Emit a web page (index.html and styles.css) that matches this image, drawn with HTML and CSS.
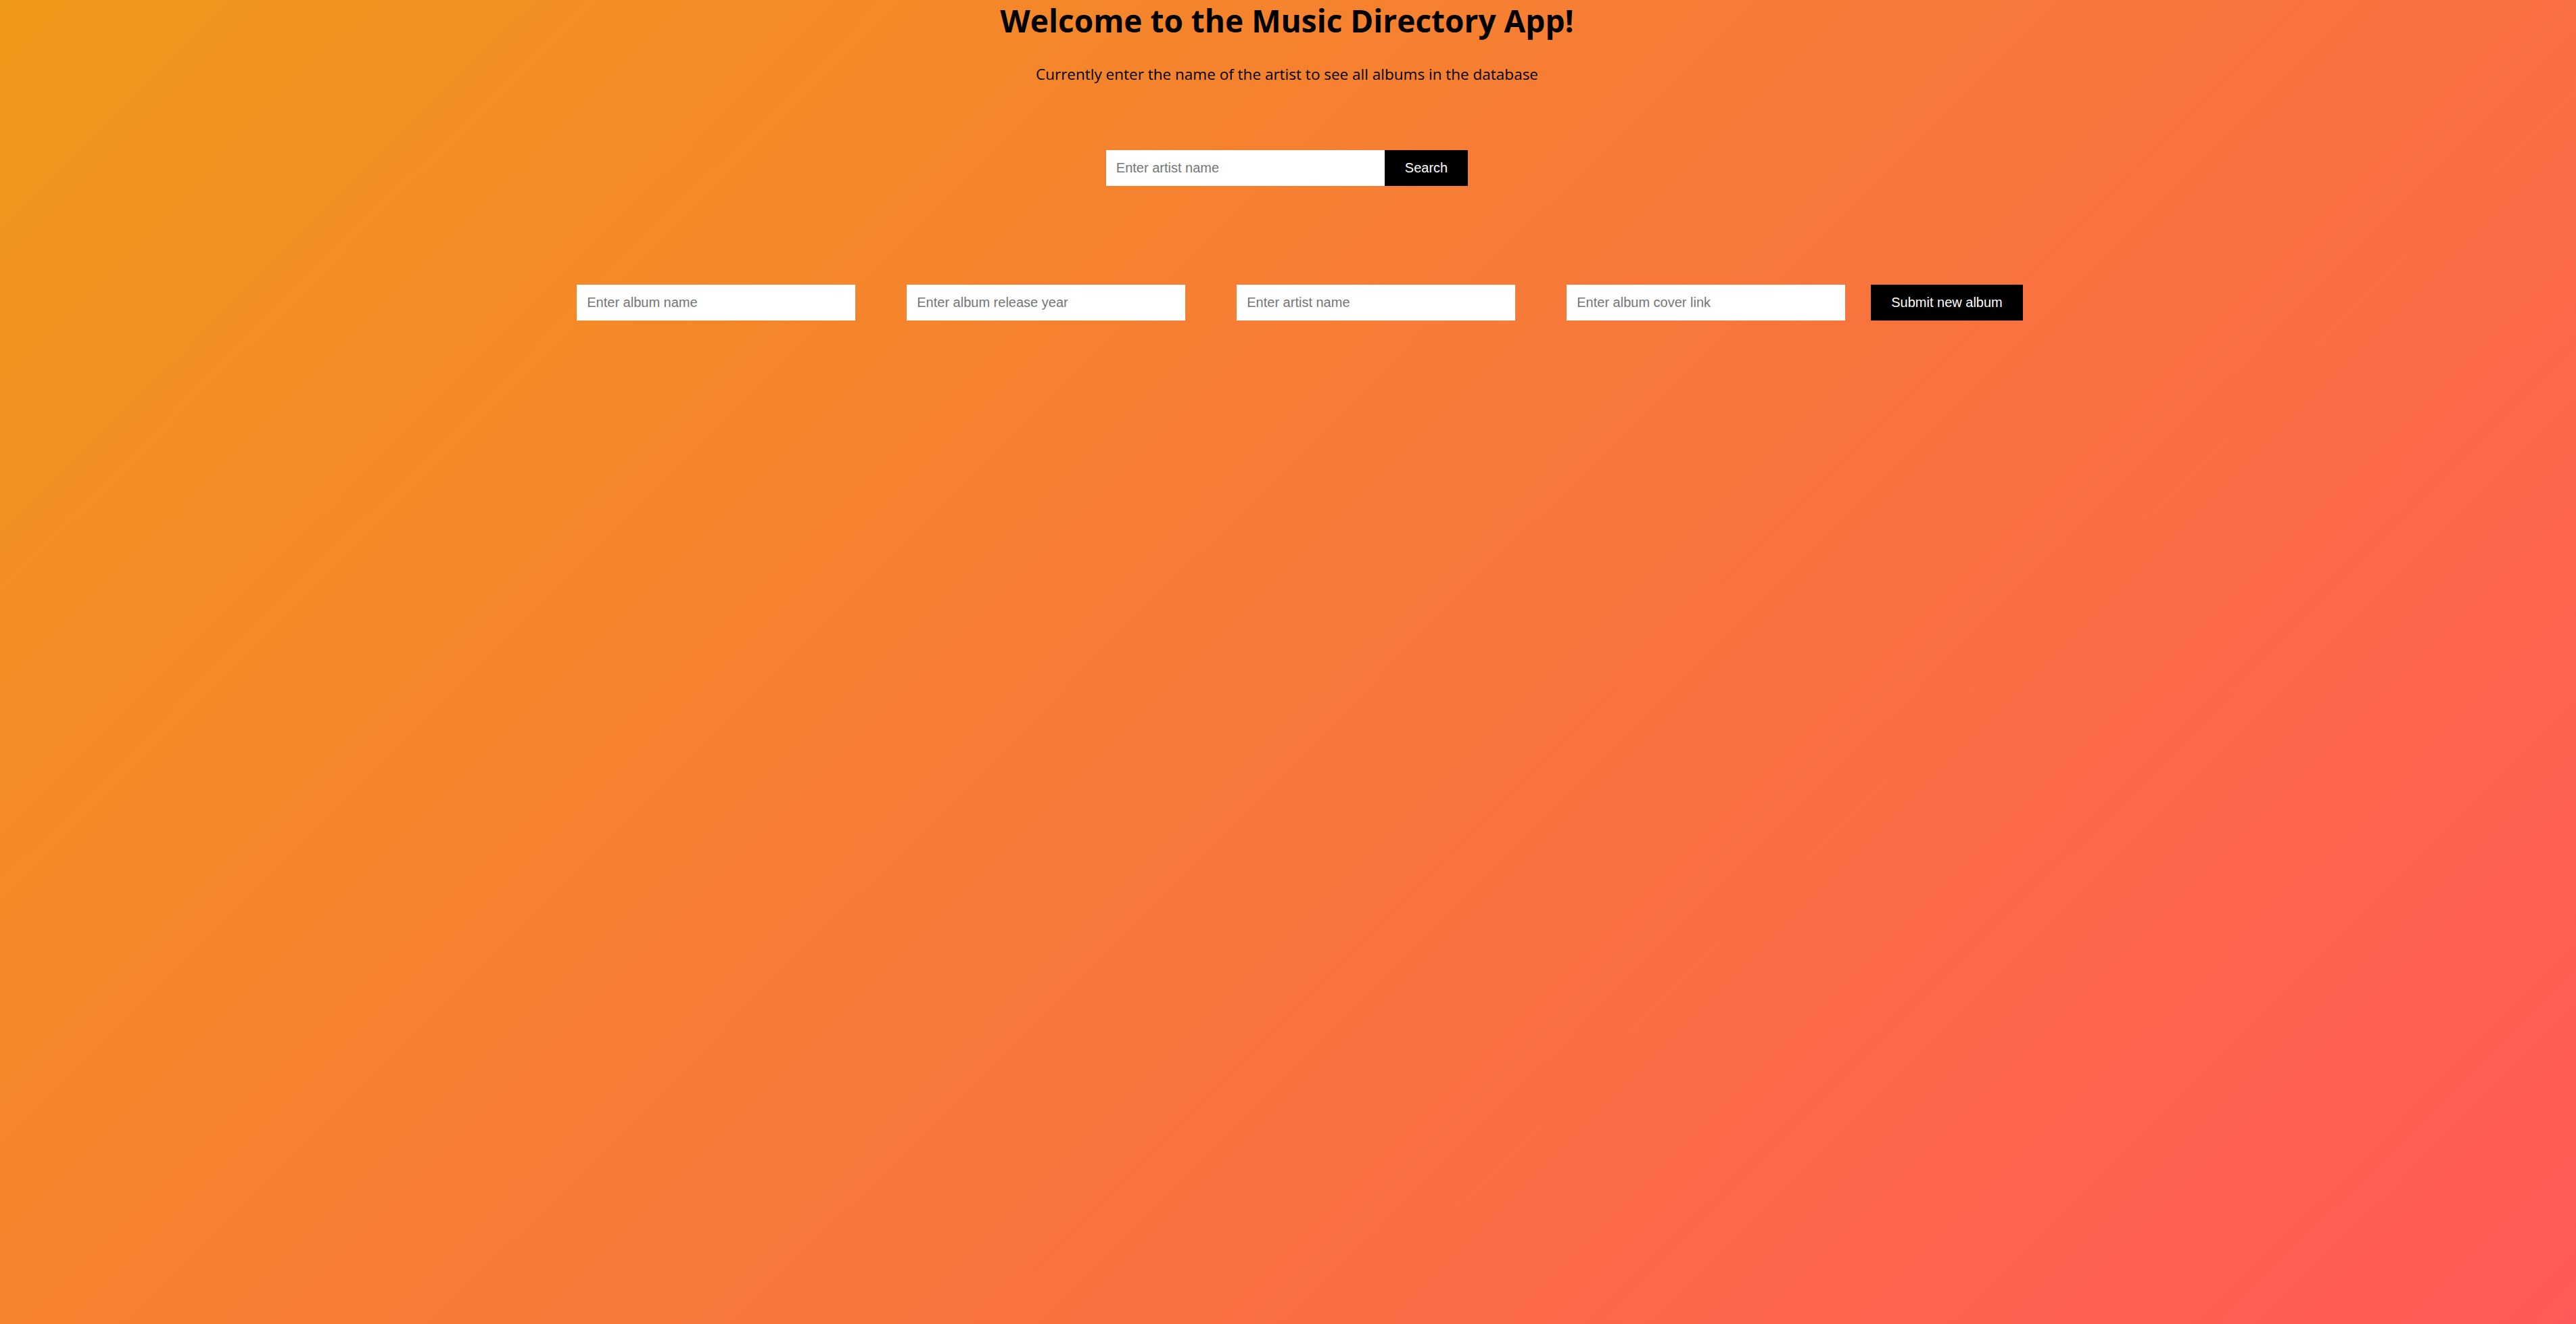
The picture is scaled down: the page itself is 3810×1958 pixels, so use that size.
FILE: index.html
```html
<!DOCTYPE html>
<html lang="en">
<head>
<meta charset="utf-8">
<title>Music Directory App</title>
<link rel="stylesheet" href="styles.css">
</head>
<body>
<div class="app">
  <h1 class="title">Welcome to the Music Directory App!</h1>
  <p class="subtitle">Currently enter the name of the artist to see all albums in the database</p>
  <form class="search-form"><input class="field search-field" type="text" placeholder="Enter artist name"><button class="btn" type="button">Search</button></form>
  <form class="album-form"><input class="field album-field" type="text" placeholder="Enter album name"><input class="field album-field" type="text" placeholder="Enter album release year"><input class="field album-field" type="text" placeholder="Enter artist name"><input class="field album-field" type="text" placeholder="Enter album cover link"><button class="btn" type="button">Submit new album</button></form>
</div>
</body>
</html>
```
FILE: styles.css
```css
html, body {
  margin: 0;
  padding: 0;
}
body {
  min-height: 100vh;
  background: linear-gradient(135deg, #f09819 0%, #ff5858 100%);
  font-family: "Open Sans", "Noto Sans", sans-serif;
  color: #000;
}
.app {
  display: flex;
  flex-direction: column;
  align-items: center;
  padding-right: 3px;
}
.title {
  margin: 0;
  font-size: 46px;
  font-weight: 700;
  line-height: 60px;
  text-align: center;
}
.subtitle {
  margin: 35px 0 0;
  font-size: 22.5px;
  line-height: 30px;
  text-align: center;
}
.search-form {
  display: flex;
  justify-content: center;
  margin-top: 97px;
}
.album-form {
  display: flex;
  justify-content: center;
  margin-top: 146px;
}
.field {
  box-sizing: border-box;
  width: 412px;
  height: 53px;
  padding: 0 15px;
  border: none;
  outline: none;
  background: #fff;
  font-family: "Liberation Sans", Arial, sans-serif;
  font-size: 20px;
  color: #000;
}
.field::placeholder {
  color: #757575;
}
.album-field {
  margin: 0 38px;
}
.btn {
  box-sizing: border-box;
  height: 53px;
  padding: 0 30px;
  border: none;
  background: #000;
  color: #fff;
  font-family: "Liberation Sans", Arial, sans-serif;
  font-size: 20px;
  cursor: pointer;
}
```
